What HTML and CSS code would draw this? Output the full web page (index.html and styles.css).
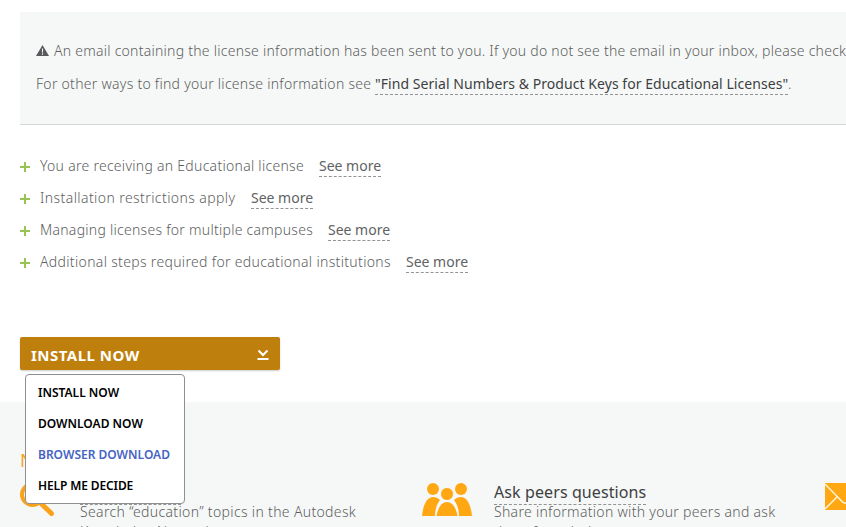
FILE: index.html
```html
<!DOCTYPE html>
<html lang="en">
<head>
<meta charset="utf-8">
<title>Install software</title>
<link rel="stylesheet" href="styles.css">
</head>
<body>
<section class="notice">
  <p class="notice-line"><svg class="warn" viewBox="0 0 13 11"><path d="M6.500 0 13 11H0z" fill="#58595b"/><path d="M6.500 3.500v4M6.500 8.300v1.400" stroke="#f6f8f7" stroke-width="1.100"/></svg><span class="t-email">An email containing the license information has been sent to you. If you do not see the email in your inbox, please check</span></p>
  <p class="notice-line"><span class="t-other">For other ways to find your license information see</span><a class="link strong-link">"Find Serial Numbers &amp; Product Keys for Educational Licenses"</a>.</p>
</section>
<ul class="facts">
  <li><i class="plus"></i><span class="t-a">You are receiving an Educational license</span><a class="link">See more</a></li>
  <li><i class="plus"></i><span class="t-b">Installation restrictions apply</span><a class="link">See more</a></li>
  <li><i class="plus"></i><span class="t-c">Managing licenses for multiple campuses</span><a class="link">See more</a></li>
  <li><i class="plus"></i><span class="t-d">Additional steps required for educational institutions</span><a class="link">See more</a></li>
</ul>
<div class="install">
  <button class="install-btn"><span>INSTALL NOW</span><svg width="12" height="12" viewBox="0 0 12 12" fill="none" stroke="#fff" stroke-width="2"><path d="M1.500 1.500 6 6l4.500-4.500M.5 10h11"/></svg></button>
  <ul class="menu">
    <li>INSTALL NOW</li>
    <li>DOWNLOAD NOW</li>
    <li class="active">BROWSER DOWNLOAD</li>
    <li class="m-d">HELP ME DECIDE</li>
  </ul>
</div>
<section class="help">
  <h2>Need help?</h2>
  <div class="help-grid">
    <article class="card card-search">
      <svg class="icon" width="36" height="36" viewBox="0 0 36 36" fill="none" stroke="#faa21b"><circle cx="12.500" cy="11.500" r="10.500" stroke-width="4"/><path d="M21 20.500 31.500 30.500" stroke-width="5" stroke-linecap="round"/></svg>
      <div class="body"><h3><a>Search topics</a></h3><p><span class="t-search">Search “education” topics in the Autodesk</span><br><span class="t-know">Knowledge Network</span></p></div>
    </article>
    <article class="card card-peers">
      <svg class="icon" width="50" height="34" viewBox="0 0 50 34" fill="#ffa814"><circle cx="11" cy="6" r="6"/><circle cx="39" cy="6" r="6"/><path d="M0 33C1 22 5 14 11 14c3 0 5 1 7 3-3 4-5 9-5 16zM50 33C49 22 45 14 39 14c-3 0-5 1-7 3 3 4 5 9 5 16z"/><circle cx="25" cy="11" r="6.500" stroke="#f6f8f7"/><path d="M14.500 33C16 24 20 19 25 19s9 5 10.500 14z"/></svg>
      <div class="body"><h3><a>Ask peers questions</a></h3><p><span class="t-share">Share information with your peers and ask</span><br><span class="t-know">them for solutions</span></p></div>
    </article>
    <article class="card card-mail">
      <svg class="icon" width="40" height="27" viewBox="0 0 40 27"><path d="M0 0h40v27H0z" fill="#ffa814"/><path d="M0 1 17.500 19q2.500 2 5 0L40 1M0 26l12-12M40 26 28 14" fill="none" stroke="#fff4d5" stroke-width="1.500"/></svg>
    </article>
  </div>
</section>
</body>
</html>
```

FILE: styles.css
```css
* { box-sizing: border-box; }
body { margin: 0; padding-top: 12px; height: 527px; overflow: hidden; background: #fff; color: #5c5e60; font: 300 14px/20px "Noto Sans", sans-serif; }
h2, h3, p, ul { margin: 0; padding: 0; list-style: none; }
.notice { margin-left: 20px; height: 113px; padding: 26px 0 0 16px; background: #f6f8f7; border-bottom: 1px solid #d6d7d7; white-space: nowrap; overflow: hidden; }
.notice-line { display: flex; height: 33px; align-items: flex-start; line-height: 25px; }
.warn { width: 13px; height: 11px; margin: 7px 5px 0 0; flex: none; }
.link { font-weight: 400; color: #606264; border-bottom: 1px dashed #929394; line-height: 24px; height: 23px; width: 62px; }
.strong-link { color: #3d3f42; width: 413px; margin: 0 0 0 4px; height: 24px; line-height: 25px; letter-spacing: 0.055px; }
.t-email { letter-spacing: 0.253px; }
.t-other { width: 335px; letter-spacing: 0.27px; }
.facts { padding: 29px 0 0 20px; white-space: nowrap; }
.facts li { display: flex; height: 32px; }
.facts li > span { margin-right: 15px; line-height: 24px; }
.plus { width: 10px; height: 10px; margin: 8px 10px 0 0; background: linear-gradient(#99c455, #99c455) center / 10px 2px no-repeat, linear-gradient(#99c455, #99c455) center / 2px 10px no-repeat; }
.t-a { width: 264px; letter-spacing: 0.28px; }
.t-b { width: 196px; letter-spacing: 0.42px; }
.t-c { width: 273px; letter-spacing: 0.27px; }
.t-d { width: 351px; letter-spacing: 0.33px; }
.install { position: relative; margin: 55px 0 0 20px; width: 260px; height: 33px; }
.install-btn { display: flex; justify-content: space-between; align-items: center; width: 260px; height: 33px; padding: 3px 11px 0; border: 0; border-radius: 2px; background: #be7f0d; color: #fff; font: 700 15px/20px "Noto Sans", sans-serif; letter-spacing: 0.48px; box-shadow: 0 1px 2px #0003; }
.menu { position: absolute; z-index: 2; left: 5px; top: 37px; width: 160px; height: 130px; padding: 2px 0 0 12px; background: #fff; border: 1px solid #8e8f90; border-radius: 4px; color: #000; font-weight: 600; font-size: 12px; white-space: nowrap; }
.menu li { height: 31px; line-height: 31px; }
.menu .active { color: #4563c4; }
.menu .m-d { letter-spacing: -0.12px; }
.help { margin-top: 32px; height: 125px; padding: 46px 0 0 20px; background: #f6f8f7; overflow: hidden; }
.help h2 { font-size: 18px; line-height: 24px; font-weight: 400; color: #faa21b; }
.help-grid { display: grid; grid-template-columns: 402px 403px 40px; padding-top: 9px; white-space: nowrap; }
.card { display: flex; }
.icon { flex: none; margin-top: 2px; overflow: visible; }
.card-search .icon { margin-right: 24px; }
.card-peers .icon { margin-right: 22px; }
h3 { font-size: 16px; font-weight: 400; line-height: 22px; color: #3d3f42; letter-spacing: 0.1px; }
h3 a { display: inline-block; height: 24px; border-bottom: 1px dashed #929394; }
.body p { margin-top: -3px; line-height: 20px; }
.t-search { letter-spacing: 0.34px; }
.t-share { letter-spacing: 0.3px; }
.t-know { letter-spacing: 0.3px; }
```
